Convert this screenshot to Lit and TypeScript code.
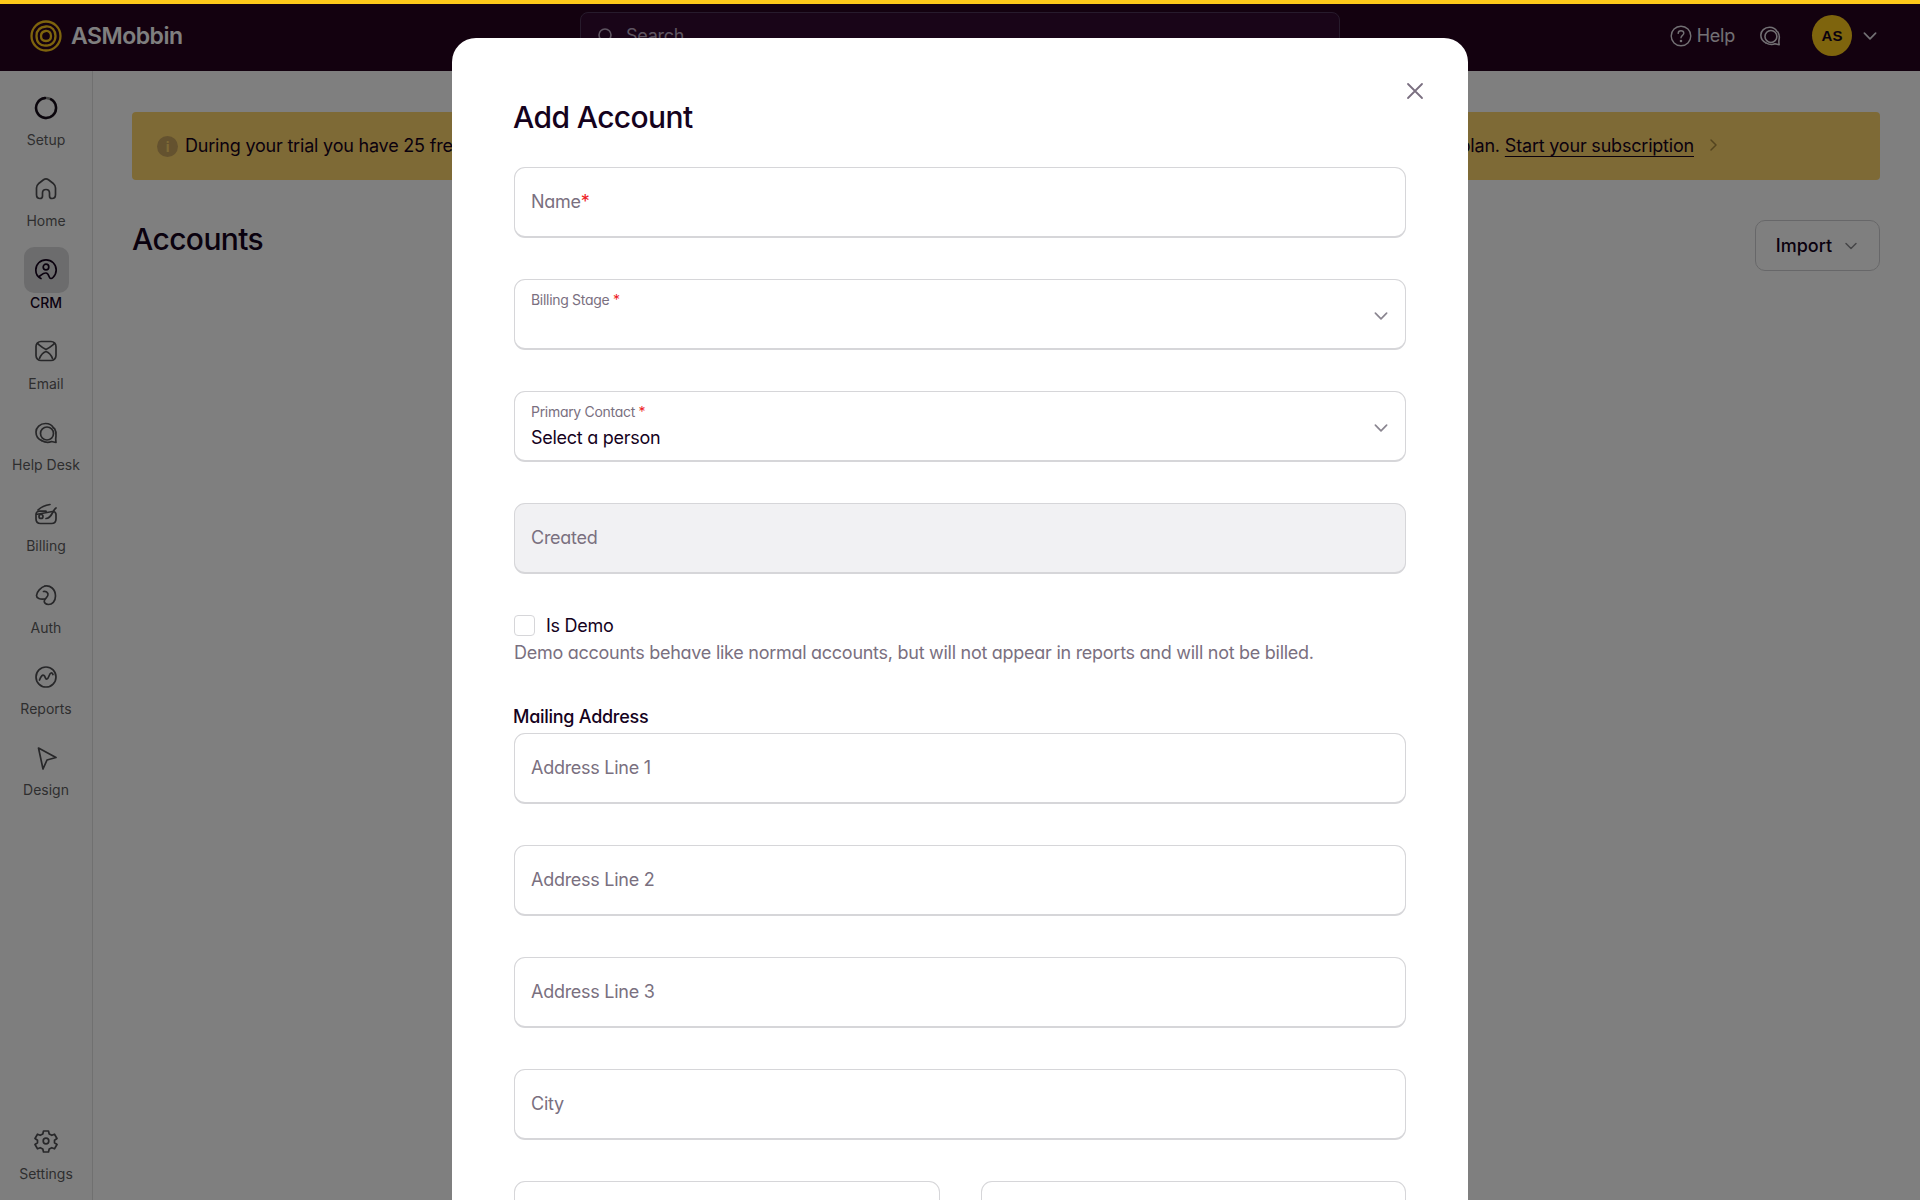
import { LitElement, html, css, svg } from "lit";
import { customElement } from "lit/decorators.js";

const chev = (s: number) => html`<svg width=${s} height=${s} viewBox="0 0 16 16" fill="none" stroke="currentColor" stroke-width="1.5" stroke-linecap="round" stroke-linejoin="round"><path d="M3 5.500 8 10.500 13 5.500"/></svg>`;

const icons: Record<string, unknown> = {
  setup: svg`<circle cx="12" cy="12" r="10" stroke="#8a8a8a" stroke-width="2.400"/><path d="M17 3.300A10 10 0 1 1 11 2.050" stroke="#150a18" stroke-width="2.400"/>`,
  home: svg`<path d="M6 21.500C3.500 21.500 2.500 20 2.500 17.500V11C2.500 9 3.500 7.600 5 6.200L9.500 2.800C11 1.700 13 1.700 14.500 2.800L19 6.200C20.500 7.600 21.500 9 21.500 11V17.500C21.500 20 20.500 21.500 18 21.500 16.500 21.500 15.500 20.500 15.500 19V16C15.500 14 14 12.500 12 12.500S8.500 14 8.500 16V19C8.500 20.500 7.500 21.500 6 21.500Z"/>`,
  crm: svg`<path d="M7 20.500C3.500 18.800 1.800 15.500 1.800 12 1.800 6.300 6.300 1.800 12 1.800S22.200 6.300 22.200 12C22.200 15 21 17.500 19 19.500 17.500 21 16 20.800 15.300 19 14.500 17 14 15.200 12 15 9 14.700 7.500 17 5 18.500"/><circle cx="12" cy="9" r="2.800"/>`,
  email: svg`<rect x="2" y="2.500" width="20" height="19" rx="5"/><path d="M3.500 4.500C6 6.500 8.500 9 12 10.500 15.500 9 18 6.500 20.500 4.500M5.500 19.500C7 15.500 9 13.500 12 12.500 15 13.500 17 15.500 18.500 19.500"/>`,
  help: svg`<path d="M7.500 19.500C4.200 18 2 15 2 11 2 6.500 6 2.500 11.500 2.500 15 2.500 18 4 19.500 7"/><circle cx="13" cy="12.500" r="6.500"/><path d="M20.500 7.500C22 10 22.500 12.500 22 15 21.600 17 21.500 19 22 21.500L17.500 20.500C14.500 21.800 11 21.500 7.500 19.500"/>`,
  billing: svg`<path d="M2 12.500C2 10.300 3.500 9.200 5.500 9.200H12M18.500 9.500C20.800 9.500 22 10.500 22 12.500V17C22 20 20 21.500 17.500 21.500H6.500C4 21.500 2 20 2 17V12.500Z"/><circle cx="7" cy="14.500" r="2"/><path d="M4 8C7 5 11 3.200 16 2.500M12 16.500C15 16.500 17 14 19 10 20 8 21 6.500 22 6"/>`,
  auth: svg`<path d="M11 3C16 2 21.500 6 21.500 13 21.500 18.500 18 21.500 14.500 21.500 11.500 21.500 9.500 19.500 10.500 17 11.500 15 14.500 14 14 11 13.500 9 11.500 8 9.500 8.500"/><path d="M11 3C7 4 2.500 9 2.500 12.500 2.500 15.500 6 16.500 10.500 16"/>`,
  reports: svg`<path d="M12 2C17.500 2 22 6.500 22 12S17.500 22 12 22 2 17.500 2 12 6.500 2 12 2Z"/><path d="M5.500 15C7 11 8.500 9.500 10 10.500 11.500 11.500 11 14.500 13 14 15 13.500 15 8.500 17 8 18 7.800 18.500 8.500 19 9.500"/>`,
  design: svg`<path d="M4.500 2 22 11.500 13 14 9 23 4.500 2Z"/>`,
  settings: svg`<circle cx="12" cy="12" r="2.800"/><path d="M9.500 2H14.500L15.200 5 17.800 6.300 20.500 5.200 23 9.500 20.500 11.200V13.800L23 15.500 20.500 19.800 17.800 18.700 15.200 20 14.500 23H9.500L8.800 20 6.200 18.700 3.500 19.800 1 15.500 3.500 13.800V11.200L1 9.500 3.500 5.200 6.200 6.300 8.800 5Z"/>`,
};

const nav = [
  ["setup", "Setup"], ["home", "Home"], ["crm", "CRM"], ["email", "Email"], ["help", "Help Desk"],
  ["billing", "Billing"], ["auth", "Auth"], ["reports", "Reports"], ["design", "Design"],
];

@customElement("app-root")
export class AppRoot extends LitElement {
  static styles = css`
    :host { display: block; position: relative; width: 1920px; height: 1200px; overflow: hidden; background: #fff;
      font-family: Inter, "Liberation Sans", sans-serif; color: #15021d; }
    * { box-sizing: border-box; }
    .topbar { position: absolute; z-index: 5; left: 0; top: 0; width: 100%; height: 4px; background: #fdc91a; }
    .header { height: 71px; background: #26021f; color: #fff; display: flex; align-items: center; }
    .brand { display: flex; align-items: center; margin-left: 30px; width: 550px; gap: 9px; font-size: 23px; font-weight: 600; letter-spacing: -0.5px; }
    .search { width: 760px; height: 47px; border: 1.500px solid #4e3658; border-radius: 8px; background: #330a30; display: flex; align-items: center; padding: 0 16px; gap: 11px; color: #bcaac2; font-size: 18px; letter-spacing: -0.25px; align-self: flex-start; margin-top: 12px; }
    .hright { margin-left: auto; display: flex; align-items: center; color: #fff; font-size: 18px; padding-right: 41px; }
    .help { display: flex; align-items: center; gap: 5px; font-weight: 400; color: #e5e0e7; letter-spacing: -0.25px; }
    .chat { margin: 0 31px 0 24px; display: flex; color: #e5e0e7; }
    .avatar { width: 40px; height: 41px; border-radius: 50%; background: #fdc91a; color: #15021d; display: flex; align-items: center; justify-content: center; font-size: 15px; font-weight: 700; font-family: "Liberation Sans", sans-serif; }
    .hchev { margin-left: 9px; display: flex; color: #e5e0e7; }
    .body { display: flex; height: 1129px; }
    .side { width: 93px; background: #fdfdfd; border-right: 1px solid #e0e0e0; display: flex; flex-direction: column; align-items: center; padding-top: 13.500px; flex: none; }
    .nav { width: 92px; height: 81.300px; display: flex; flex-direction: column; align-items: center; font-size: 14px; line-height: 17px; color: #5d5d5f; gap: 0.500px; }
    .ic { width: 45px; height: 46px; border-radius: 10px; display: flex; align-items: center; justify-content: center; color: #4f4f52; }
    .nav.on { color: #15021d; font-weight: 500; }
    .nav.on .ic { background: #d9d9db; color: #15021d; }
    .nav svg { fill: none; stroke: currentColor; stroke-width: 1.700; stroke-linecap: round; stroke-linejoin: round; }
    .spacer { flex: 1; }
    .settings { margin-bottom: 12px; height: 70px; }
    .main { flex: 1; padding: 41px 40px 0 39px; }
    .banner { height: 68px; background: #fdd46c; border-radius: 4px; display: flex; align-items: center; padding: 0 25px; font-size: 18px; letter-spacing: -0.2px; color: #15021d; }
    .banner > div, .bright { position: relative; top: -1px; }
    .infoi { width: 21px; height: 21px; border-radius: 50%; background: #c8a45e; color: #fdd46c; display: flex; align-items: center; justify-content: center; margin-right: 7px; font-size: 14px; font-weight: 700; flex: none; }
    .banner > .infoi { top: 0; }
    .bleft { width: 290px; white-space: nowrap; overflow: hidden; }
    .bright { margin-left: auto; display: flex; align-items: center; white-space: nowrap; padding-right: 135px; }
    .bright a { text-decoration: underline; text-underline-offset: 4px; text-decoration-thickness: 1px; margin-left: 5px; padding-right: 4px; }
    .bchev { margin-left: 8px; display: flex; color: #a8893e; }
    .titlerow { display: flex; justify-content: space-between; margin-top: 37px; }
    .titlerow h1 { margin: 0; font-size: 30px; font-weight: 450; line-height: 44px; letter-spacing: -0.6px; }
    .import { width: 125px; height: 51px; margin-top: 3px; border: 1.500px solid #cfcfd2; border-radius: 10px; background: #fff; display: flex; align-items: center; justify-content: center; gap: 11px; font-size: 18px; font-weight: 450; }
    .import span { display: flex; color: #8a8a8e; }
    .overlay { position: absolute; inset: 0; z-index: 2; background: rgba(0,0,0,.5); }
    .modal { position: absolute; z-index: 3; left: 452px; top: 38px; width: 1016px; height: 1300px; background: #fff; border-radius: 24px; padding: 60px 62px 0; font-feature-settings: "cv11"; letter-spacing: -0.27px; }
    .close { position: absolute; top: 44px; right: 44px; display: flex; color: #7a6f80; }
    .modal h2 { margin: 0 0 30.500px -1px; font-size: 30px; font-weight: 450; line-height: 38px; letter-spacing: -0.6px; }
    .form { display: flex; flex-direction: column; gap: 41px; }
    .field { position: relative; height: 71px; border: 1.500px solid #d6d6d9; border-bottom-width: 2px; border-radius: 11px; padding: 0 16px; display: flex; align-items: center; font-size: 18px; color: #7a707f; background: #fff; }
    .field.ro { background: #f1f1f3; }
    .req { color: #ee1c25; }
    .sel { display: block; padding-top: 10.500px; }
    .sel small { display: block; font-size: 14px; line-height: 20px; color: #7a707f; letter-spacing: -0.3px; }
    .sel .val { display: block; font-size: 18px; line-height: 28px; margin-top: 2px; color: #15021d; }
    .sel .cv { position: absolute; right: 15.500px; top: 27.500px; display: flex; color: #8a8590; }
    .demo { margin-top: -1px; }
    .demo-row { display: flex; align-items: center; gap: 11px; font-size: 18px; color: #15021d; line-height: 24px; }
    .box { width: 21px; height: 21px; border: 1.500px solid #d6d6d9; border-radius: 4px; background: #fff; }
    .hint { font-size: 18px; color: #7a707f; line-height: 26px; margin-top: 2px; }
    .addr { margin-top: -2px; display: flex; flex-direction: column; gap: 41px; }
    .addr-label { font-size: 18px; font-weight: 500; color: #15021d; line-height: 24px; margin: 0 0 4px -1px; }
    .mail { display: flex; flex-direction: column; }
    .two { display: grid; grid-template-columns: 1fr 1fr; gap: 41px; }
  `;

  render() {
    return html`
      <div class="topbar"></div>
      <div class="header">
        <div class="brand">
          <svg width="32" height="32" viewBox="0 0 32 32" fill="none" stroke="#fdc91a" stroke-width="2.300">
            <path d="M16 1.500C24 1.500 30.500 8 30.500 16 30.500 24 24 30.500 16 30.500 8 30.500 1.500 24 1.500 16 1.500 8 8 1.500 16 1.500Z"/>
            <path d="M16 6.500C22 6 25.500 10.500 25.500 16 25.500 22 21.500 26 16 25.500 10 26 6.500 22 6.500 16 6.500 10.500 10 7 16 6.500Z"/>
            <path d="M15.500 11C19 10.500 21 13 21 16 21 19 19 21 16 21 13 21 11 19 11 16 11 13 12.500 11.500 15.500 11Z"/>
          </svg>
          ASMobbin
        </div>
        <div class="search">
          <svg width="18" height="18" viewBox="0 0 18 18" fill="none" stroke="currentColor" stroke-width="1.600" stroke-linecap="round"><circle cx="8" cy="8" r="6"/><path d="M12.500 12.500 16 16"/></svg>
          Search
        </div>
        <div class="hright">
          <div class="help">
            <svg width="22" height="22" viewBox="0 0 22 22" fill="none" stroke="currentColor" stroke-width="1.400" stroke-linecap="round"><circle cx="11" cy="11" r="9.800"/><path d="M8.200 8.400C8.200 6.800 9.500 5.800 11 5.800 12.600 5.800 13.800 6.800 13.800 8.300 13.800 10.300 11 10.500 11 12.800"/><circle cx="11" cy="16" r=".6"/></svg>
            Help
          </div>
          <div class="chat"><svg width="22" height="22" viewBox="0 0 24 24" fill="none" stroke="currentColor" stroke-width="1.700" stroke-linecap="round" stroke-linejoin="round">${icons.help}</svg></div>
          <div class="avatar">AS</div>
          <div class="hchev">${chev(18)}</div>
        </div>
      </div>
      <div class="body">
        <div class="side">
          ${nav.map(([k, l]) => html`
            <div class="nav ${k === "crm" ? "on" : ""}">
              <div class="ic"><svg width="24" height="24" viewBox="0 0 24 24">${icons[k]}</svg></div>
              ${l}
            </div>`)}
          <div class="spacer"></div>
          <div class="nav settings">
            <div class="ic"><svg width="24" height="24" viewBox="0 0 24 24">${icons.settings}</svg></div>
            Settings
          </div>
        </div>
        <div class="main">
          <div class="banner">
            <div class="infoi">i</div>
            <div class="bleft">During your trial you have 25 free</div>
            <div class="bright">plan.<a>Start your subscription</a>
              <span class="bchev"><svg width="14" height="14" viewBox="0 0 14 14" fill="none" stroke="currentColor" stroke-width="1.500" stroke-linecap="round" stroke-linejoin="round"><path d="M5 2 10 7 5 12"/></svg></span>
            </div>
          </div>
          <div class="titlerow">
            <h1>Accounts</h1>
            <div class="import">Import <span>${chev(16)}</span></div>
          </div>
        </div>
      </div>
      <div class="overlay"></div>
      <div class="modal">
        <div class="close"><svg width="18" height="18" viewBox="0 0 18 18" fill="none" stroke="currentColor" stroke-width="1.800" stroke-linecap="round"><path d="M2 2 16 16M16 2 2 16"/></svg></div>
        <h2>Add Account</h2>
        <div class="form">
          <div class="field"><span>Name<span class="req">*</span></span></div>
          <div class="field sel"><small>Billing Stage <span class="req">*</span></small><span class="val"></span><span class="cv">${chev(18)}</span></div>
          <div class="field sel"><small>Primary Contact <span class="req">*</span></small><span class="val">Select a person</span><span class="cv">${chev(18)}</span></div>
          <div class="field ro">Created</div>
          <div class="demo">
            <div class="demo-row"><div class="box"></div>Is Demo</div>
            <div class="hint">Demo accounts behave like normal accounts, but will not appear in reports and will not be billed.</div>
          </div>
          <div class="addr">
            <div class="mail">
              <div class="addr-label">Mailing Address</div>
              <div class="field">Address Line 1</div>
            </div>
            <div class="field">Address Line 2</div>
            <div class="field">Address Line 3</div>
            <div class="field">City</div>
            <div class="two"><div class="field"></div><div class="field"></div></div>
          </div>
        </div>
      </div>
    `;
  }
}
